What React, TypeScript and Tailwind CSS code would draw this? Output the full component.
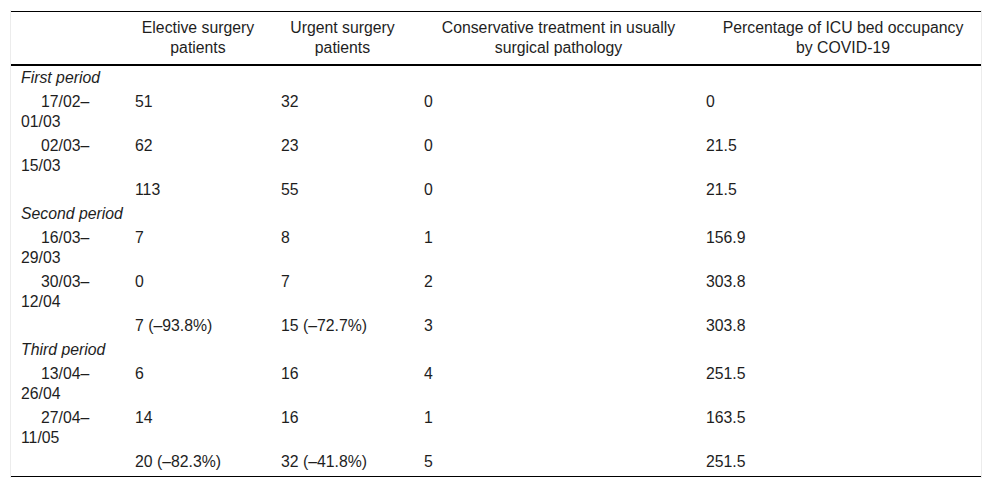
type Row = {
  label: string;
  elective?: string;
  urgent?: string;
  conservative?: string;
  icu?: string;
  group?: boolean;
};

const rows: Row[] = [
  { label: "First period", group: true },
  { label: "17/02–01/03", elective: "51", urgent: "32", conservative: "0", icu: "0" },
  { label: "02/03–15/03", elective: "62", urgent: "23", conservative: "0", icu: "21.5" },
  { label: "", elective: "113", urgent: "55", conservative: "0", icu: "21.5" },
  { label: "Second period", group: true },
  { label: "16/03–29/03", elective: "7", urgent: "8", conservative: "1", icu: "156.9" },
  { label: "30/03–12/04", elective: "0", urgent: "7", conservative: "2", icu: "303.8" },
  { label: "", elective: "7 (–93.8%)", urgent: "15 (–72.7%)", conservative: "3", icu: "303.8" },
  { label: "Third period", group: true },
  { label: "13/04–26/04", elective: "6", urgent: "16", conservative: "4", icu: "251.5" },
  { label: "27/04–11/05", elective: "14", urgent: "16", conservative: "1", icu: "163.5" },
  { label: "", elective: "20 (–82.3%)", urgent: "32 (–41.8%)", conservative: "5", icu: "251.5" },
];

const App = () => {
  return (
    <div className="w-[992px] h-[489px] bg-white px-[10px] pt-[10px] font-['Liberation_Sans',Arial,sans-serif] text-[15.8px] leading-[20px] text-[#1e1e1e]">
      <div className="border-x border-[#ececec] pt-px pb-px">
        <table className="w-[970px] table-fixed border-collapse border-t border-b border-black">
          <colgroup>
            <col className="w-[114px]" />
            <col className="w-[146px]" />
            <col className="w-[143px]" />
            <col className="w-[282px]" />
            <col className="w-[285px]" />
          </colgroup>
          <thead>
            <tr className="border-b-2 border-black">
              <th className="px-[10px] py-[6px] font-normal"></th>
              <th className="px-[10px] py-[6px] font-normal text-center align-top">Elective surgery patients</th>
              <th className="px-[10px] py-[6px] font-normal text-center align-top">Urgent surgery patients</th>
              <th className="pl-[17px] pr-[10px] py-[6px] font-normal text-center align-top">
                Conservative treatment in usually surgical pathology
              </th>
              <th className="pl-[19px] pr-[10px] py-[6px] font-normal text-center align-top">
                Percentage of ICU bed occupancy by COVID-19
              </th>
            </tr>
          </thead>
          <tbody>
            {rows.map((r, i) => {
              const last = i === rows.length - 1;
              const cell = `px-[10px] pt-[2px] align-top text-left ${last ? "pb-[4px]" : "pb-[2px]"}`;
              if (r.group) {
                return (
                  <tr key={i}>
                    <td className={`${cell} italic whitespace-nowrap`}>{r.label}</td>
                    <td className={cell}></td>
                    <td className={cell}></td>
                    <td className={cell}></td>
                    <td className={cell}></td>
                  </tr>
                );
              }
              return (
                <tr key={i}>
                  <td className={`${cell} indent-[20px]`}>{r.label}</td>
                  <td className={cell}>{r.elective}</td>
                  <td className={cell}>{r.urgent}</td>
                  <td className={cell}>{r.conservative}</td>
                  <td className={cell}>{r.icu}</td>
                </tr>
              );
            })}
          </tbody>
        </table>
      </div>
    </div>
  );
};

export default App;
